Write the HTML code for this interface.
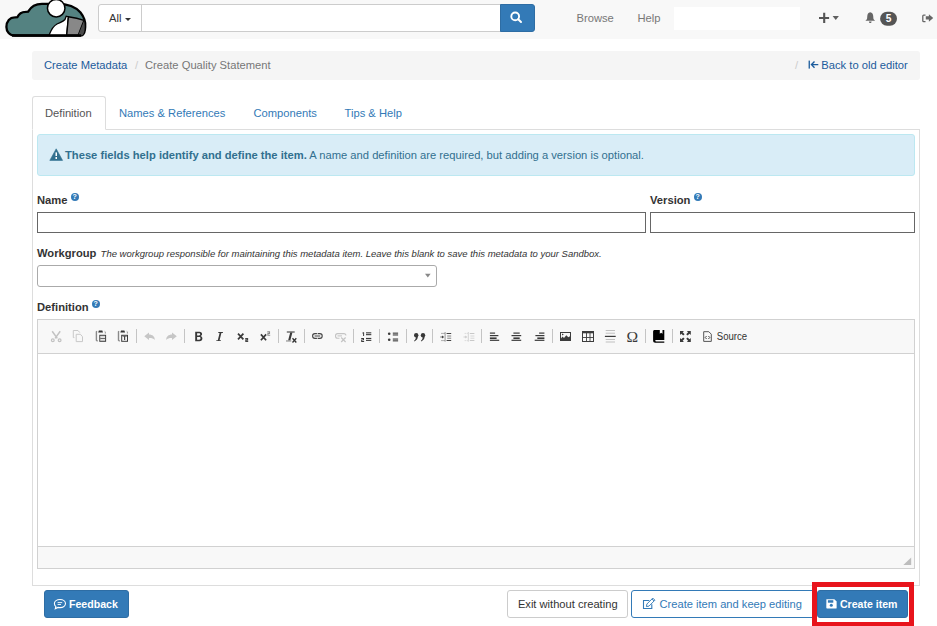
<!DOCTYPE html>
<html><head><meta charset="utf-8">
<style>
*{box-sizing:border-box;margin:0;padding:0}
html,body{width:937px;height:626px;overflow:hidden;background:#fff;font-family:"Liberation Sans",sans-serif;font-size:11.2px;color:#333;position:relative}
.abs{position:absolute}
#nav{left:0;top:0;width:937px;height:38.8px;background:#f8f8f8}
#ig{left:98px;top:4px;width:437px;height:28px}
#allbtn{left:0;top:0;width:44px;height:28px;border:1px solid #ccc;border-radius:3px 0 0 3px;background:#fff}
#inp{left:43px;top:0;width:360px;height:28px;border:1px solid #ccc;background:#fff}
#sbtn{left:402px;top:0;width:35px;height:28px;background:#337ab7;border:1px solid #2e6da4;border-radius:0 3px 3px 0}
.navtxt{color:#777;font-size:11.2px}
#bc{left:32px;top:51px;width:888px;height:29px;background:#f5f5f5;border-radius:3px}
.link{color:#1b5b9c}
#tabc{left:32px;top:129px;width:888px;height:457px;border:1px solid #ddd;border-top:1px solid #ddd}
#tabact{left:32px;top:96px;width:74px;height:34px;border:1px solid #ddd;border-bottom:1px solid #fff;border-radius:3px 3px 0 0;background:#fff}
.tab{color:#337ab7}
#alert{left:37px;top:134px;width:878px;height:42px;background:#d9edf7;border:1px solid #bce8f1;border-radius:3px;color:#31708f}
.lbl{font-weight:bold;color:#333}
.q{position:relative;top:-1px;display:inline-block;width:8px;height:8px;border-radius:50%;background:#337ab7;color:#fff;font-size:7px;line-height:8px;text-align:center;font-weight:bold;vertical-align:top}
.inp{border:1px solid #666;background:#fff}
#editor{left:37px;top:319px;width:878px;height:250px;border:1px solid #d1d1d1;background:#fff}
#tb{left:0;top:0;width:876px;height:34px;background:#f8f8f8;border-bottom:1px solid #d1d1d1}
#bb{left:0;top:226px;width:876px;height:22px;background:#f8f8f8;border-top:1px solid #d1d1d1}
.btn{border-radius:3px;font-size:11.2px;text-align:center}
</style></head><body>
<div id="nav" class="abs"></div>
<svg class="abs" style="left:0;top:0" width="90" height="40" viewBox="0 0 90 40">
  <path d="M15 35.5 C9.5 35.5 6.4 31.5 6.4 27 C6.4 21 10 17.3 14.5 17.3 L17.3 17.2 C19 13.5 22 11.8 25.5 11.8 L28.1 11.6 C31 6.5 36 3.8 42 3.8 L56 3.8 C68 3.6 76 7 80.5 12.5 C84.5 17.5 85.6 23 85.2 27 C85 31.5 84 34 82.5 35 C81.8 35.5 81 35.5 80 35.5 Z" fill="#548281" stroke="#000" stroke-width="2.3"/>
  <path d="M49 35.3 C51 30 53 26 57 24 C60 22.5 63 22 65 19.5 L66.2 16.2 L68.4 16.7 L66.7 35.3 Z" fill="#fff" stroke="#000" stroke-width="1.3"/>
  <path d="M68.4 16.7 C73 17.3 79 18.5 84 20.3 L78.2 35.3 L66.7 35.3 Z" fill="#888" stroke="#000" stroke-width="1.4"/>
  <path d="M83.8 21.5 L78.2 35.3 L82.5 35.3 C84.5 33 85.2 28 84.3 21.5 Z" fill="#4a4a4a"/>
  <path d="M12 35.5 L81 35.5" stroke="#000" stroke-width="2.4"/>
  <circle cx="56.2" cy="8.2" r="8.75" fill="#fff" stroke="#000" stroke-width="1.5"/>
</svg>
<div id="ig" class="abs">
  <div id="allbtn" class="abs"><span class="abs" style="left:10px;top:7px;font-size:11.2px;color:#333">All</span><span class="abs" style="left:26px;top:12.6px;width:0;height:0;border-left:3px solid transparent;border-right:3px solid transparent;border-top:3px solid #333"></span></div>
  <div id="inp" class="abs"></div>
  <div id="sbtn" class="abs">
    <svg class="abs" style="left:-2px;top:-5px" width="36" height="28" viewBox="499 0 36 28"><circle cx="515.2" cy="16.4" r="3.9" fill="none" stroke="#fff" stroke-width="1.9"/><path d="M518.2 19.3 L521 22" stroke="#fff" stroke-width="2" stroke-linecap="round"/></svg>
  </div>
</div>
<span class="abs navtxt" style="left:576.5px;top:12px">Browse</span>
<span class="abs navtxt" style="left:637.5px;top:12px">Help</span>
<div class="abs" style="left:674px;top:7px;width:126px;height:23px;background:#fff"></div>
<svg class="abs" style="left:810px;top:0" width="127" height="38" viewBox="810 0 127 38">
 <path d="M824.2 12.8 V22.9 M819 18 H829.1" stroke="#555" stroke-width="2.1"/>
 <path d="M832.6 16.1 H838.9 L835.75 19.9 Z" fill="#606060"/>
 <path d="M870.2 12.2 C868.2 12.5 867.4 14 867.3 16 L867.1 18.6 C866.9 19.6 866 20.1 865.4 20.8 H875.1 C874.5 20.1 873.6 19.6 873.4 18.6 L873.2 16 C873.1 14 872.3 12.5 870.2 12.2 Z" fill="#666"/>
 <path d="M868.9 21.4 H871.6 C871.5 22.4 871 23 870.25 23 C869.5 23 869 22.4 868.9 21.4 Z" fill="#666"/>
 <rect x="880.1" y="11.7" width="16.9" height="14" rx="7" fill="#555"/>
 <text x="888.55" y="21.6" text-anchor="middle" font-family="Liberation Sans" font-weight="bold" font-size="10.2" fill="#fff">5</text>
 <path d="M925.5 15.1 H923.7 C923.1 15.1 922.8 15.4 922.8 16 V20.8 C922.8 21.4 923.1 21.7 923.7 21.7 H925.5" fill="none" stroke="#666" stroke-width="1.3"/>
 <path d="M925.8 16.3 H928.9 V14.2 L933.2 17.95 L928.9 21.7 V19.6 H925.8 Z" fill="#666"/>
</svg>
<div id="bc" class="abs">
  <span class="abs link" style="left:12px;top:8px">Create Metadata</span>
  <span class="abs" style="left:103px;top:8px;color:#ccc">/</span>
  <span class="abs" style="left:113px;top:8px;color:#777">Create Quality Statement</span>
  <span class="abs" style="left:763px;top:8px;color:#ccc">/</span>
  <svg class="abs" style="left:0;top:0" width="888" height="29" viewBox="32 51 888 29"><rect x="808.6" y="60.6" width="1.3" height="8" fill="#1b5b9c"/><path d="M810.5 64.5 L814 61 L815 62 L813 64 H818.3 V65.2 H813 L815 67.2 L814 68.2 Z" fill="#1b5b9c"/></svg><span class="abs link" style="left:789.3px;top:8px">Back to old editor</span>
</div>

<div id="tabc" class="abs"></div>
<div id="tabact" class="abs"><span class="abs" style="left:12px;top:10px;color:#555">Definition</span></div>
<span class="abs tab" style="left:119px;top:107px">Names &amp; References</span>
<span class="abs tab" style="left:253.5px;top:107px">Components</span>
<span class="abs tab" style="left:344.5px;top:107px">Tips &amp; Help</span>

<div id="alert" class="abs"><svg class="abs" style="left:-2px;top:-2px" width="40" height="42" viewBox="36 133 40 42"><path d="M56.2 148.8 L62.6 160.4 H49.8 Z" fill="#31708f" stroke="#31708f" stroke-width="0.6" stroke-linejoin="round"/><rect x="55.5" y="152.4" width="1.5" height="3.6" fill="#fff"/><rect x="55.5" y="157" width="1.5" height="2" fill="#fff"/></svg><span class="abs" style="left:27px;top:14px"><b>These fields help identify and define the item.</b> A name and definition are required, but adding a version is optional.</span></div>

<span class="abs lbl" style="left:37px;top:194px">Name <span class="q">?</span></span>
<div class="abs inp" style="left:37px;top:212px;width:609px;height:21px"></div>
<span class="abs lbl" style="left:650px;top:194px">Version <span class="q">?</span></span>
<div class="abs inp" style="left:650px;top:212px;width:265px;height:21px"></div>

<span class="abs lbl" style="left:37px;top:247px">Workgroup <i style="font-weight:normal;font-size:9.5px;margin-left:1px">The workgroup responsible for maintaining this metadata item. Leave this blank to save this metadata to your Sandbox.</i></span>
<div class="abs" style="left:37px;top:265px;width:400px;height:22px;border:1px solid #aaa;border-radius:3px;background:#fff"></div>

<svg class="abs" style="left:420px;top:270px" width="15" height="12" viewBox="420 270 15 12"><path d="M425 273.8 H430.6 L427.8 277.6 Z" fill="#888"/></svg>
<span class="abs lbl" style="left:37px;top:301px">Definition <span class="q">?</span></span>
<div id="editor" class="abs">
  <div id="tb" class="abs"></div>
  <div id="bb" class="abs"></div>
</div>
<svg class="abs" style="left:903px;top:557px" width="9" height="9" viewBox="903 557 9 9"><path d="M903.3 565 L911.2 557.4 V565 Z" fill="#bdbdbd"/></svg>
<svg class="abs" style="left:37px;top:319px" width="878" height="34" viewBox="37 319 878 34">
<g fill="none" stroke-linecap="butt">
 <!-- cut -->
 <g stroke="#c2c2c2" stroke-width="1.2">
  <path d="M52.2 331.3 L57.3 338.4 M60.2 331.3 L55.1 338.4" stroke-width="1.5"/>
  <circle cx="52.8" cy="340.3" r="1.4"/><circle cx="59.6" cy="340.3" r="1.4"/>
 </g>
 <!-- copy -->
 <g stroke="#c8c8c8" stroke-width="1">
  <path d="M74.4 337.6 L73.3 337.6 L73.3 330.5 L78 330.5 L79.8 332.6"/>
  <path d="M76.2 334.3 L80.4 334.3 L82.5 336.7 L82.5 341.6 L76.2 341.6 Z"/>
 </g>
 <!-- paste -->
 <g>
  <path d="M97 331.3 L96.4 331.8 L96.4 340.2 L97.6 341.2" stroke="#8a8a8a" stroke-width="1.4"/>
  <path d="M104.6 331.3 L105.3 331.8 L105.3 333.6" stroke="#999" stroke-width="1"/>
  <rect x="99.8" y="335.3" width="5.8" height="6" stroke="#3c3c3c" stroke-width="1"/>
  <path d="M100.3 336.6 H105.1" stroke="#c8c8c8" stroke-width="0.7"/>
  <path d="M100.3 338.4 H105.1" stroke="#444" stroke-width="0.9"/>
  <path d="M100.3 340.2 H105.1" stroke="#aaa" stroke-width="0.7"/>
 </g>
 <path d="M98.2 332.4 L98.9 330.5 L102.3 330.5 L103 332.4 Z" fill="#333"/>
 <!-- paste text -->
 <g>
  <path d="M119.1 331.3 L118.5 331.8 L118.5 340.2 L119.7 341.2" stroke="#8a8a8a" stroke-width="1.4"/>
  <path d="M126.7 331.3 L127.4 331.8 L127.4 333.6" stroke="#999" stroke-width="1"/>
  <rect x="121.7" y="335.3" width="5.8" height="6" stroke="#3c3c3c" stroke-width="1"/>
  <path d="M122.5 336.5 H126.8" stroke="#777" stroke-width="0.8"/><path d="M124.65 336.3 V340.1" stroke="#333" stroke-width="1.1"/>
 </g>
 <path d="M120.3 332.4 L121 330.5 L124.4 330.5 L125.1 332.4 Z" fill="#333"/>
</g>
<!-- separators -->
<g stroke="#c4c4c4" stroke-width="1">
 <path d="M136.5 329 V343 M184.5 329 V343 M278.5 329 V343 M304.5 329 V343 M353.5 329 V343 M379.5 329 V343 M406.5 329 V343 M432.5 329 V343 M481.5 329 V343 M552.5 329 V343 M645.5 329 V343 M672.5 329 V343"/>
</g>
<!-- undo/redo -->
<path d="M144.3 336.3 L149 332.4 L149 334.5 C152.5 334.6 154.8 336.3 154.8 339.9 C153.3 338.2 151.3 337.9 149 338 L149 340.1 Z" fill="#c6c6c6"/>
<path d="M176.8 336.3 L172 332.4 L172 334.5 C168.5 334.6 166.2 336.3 166.2 339.9 C167.7 338.2 169.7 337.9 172 338 L172 340.1 Z" fill="#c6c6c6"/>
<!-- bold B -->
<path fill-rule="evenodd" fill="#383838" d="M195.2 331.7 H199.4 C201.3 331.7 202.1 332.8 202.1 334 C202.1 335.1 201.4 335.8 200.5 336.1 C201.6 336.4 202.4 337.3 202.4 338.6 C202.4 340.2 201.3 341.2 199.4 341.2 H195.2 Z M197.1 333.2 V335.4 H199 C199.8 335.4 200.2 335 200.2 334.3 C200.2 333.6 199.8 333.2 199 333.2 Z M197.1 336.9 V339.7 H199.2 C200 339.7 200.5 339.2 200.5 338.3 C200.5 337.4 200 336.9 199.2 336.9 Z"/>
<!-- italic I -->
<path fill="#3a3a3a" d="M218.4 331.9 H223 L222.8 332.9 H221.4 L219.6 340.2 H221 L220.8 341.1 H216.2 L216.4 340.2 H217.8 L219.6 332.9 H218.2 Z"/>
<!-- subscript -->
<g stroke="#3a3a3a" stroke-width="1.7"><path d="M238 333.6 L243.4 339.4 M243.4 333.6 L238 339.4"/></g>
<path d="M245.2 338.6 H247.6 V340.1 H245.8 V341.5 H248.2" fill="none" stroke="#444" stroke-width="1.1"/>
<!-- superscript -->
<g stroke="#3a3a3a" stroke-width="1.7"><path d="M260.9 334.4 L266.1 340.2 M266.1 334.4 L260.9 340.2"/></g>
<path d="M267.3 331.9 H269.5 V333.5 H267.9 V335.3 H270.2" fill="none" stroke="#8a8a8a" stroke-width="1.1"/>
<!-- remove format -->
<path d="M286.8 331.3 H294.7 V332.7 H286.8 Z" fill="#666"/>
<path d="M290.2 332.5 H292.4 L290.3 340.5 H288.1 Z" fill="#3a3a3a"/>
<path d="M286 340.3 H291.3 V341.6 H286 Z" fill="#9a9a9a"/>
<g stroke="#333" stroke-width="1.3"><path d="M292.5 338.2 L296.3 342.5 M296.3 338.2 L292.5 342.5"/></g>
<!-- link -->
<g stroke="#444" stroke-width="1.1" fill="none">
 <rect x="312.6" y="333.6" width="9.6" height="4.8" rx="2.3"/>
 <path d="M314.6 336 H320.2" stroke="#555"/>
 <path d="M317.4 333.2 V334.6 M317.4 337.4 V338.8" stroke="#f8f8f8" stroke-width="0.9"/>
</g>
<!-- unlink -->
<g stroke="#c4c4c4" stroke-width="1.1" fill="none">
 <path d="M339.5 338.2 H337.6 C336.2 338.2 335.5 337.3 335.5 335.9 C335.5 334.5 336.2 333.6 337.6 333.6 H343.8 C345.2 333.6 345.9 334.5 345.9 335.6"/>
 <path d="M337.5 335.9 H342"/>
 <path d="M341.2 337.5 L345.6 342 M345.6 337.5 L341.2 342" stroke-width="1.2"/>
</g>
<!-- ordered list -->
<g fill="#3a3a3a">
 <path d="M362.3 332.8 L363.4 332.3 H364.1 V336.1 H363.1 V333.3 L362.3 333.6 Z"/>
 <path d="M361.2 338 H364 V340.3 H362.2 V341 H364.1 V342 H361.2 V339.6 H363 V339 H361.2 Z"/>
 <rect x="366" y="332.3" width="5.3" height="1.1"/><rect x="366" y="334.1" width="5.3" height="1.1"/>
 <rect x="366" y="337.9" width="5.3" height="1.1"/><rect x="366" y="339.8" width="5.3" height="1.1"/>
</g>
<!-- unordered list -->
<g fill="#3a3a3a">
 <circle cx="389.2" cy="333.8" r="1.3"/><circle cx="389.2" cy="339.8" r="1.3"/>
 <rect x="392.8" y="332.6" width="5.3" height="1.1"/><rect x="392.8" y="334.4" width="5.3" height="1.1"/>
 <rect x="392.8" y="338.5" width="5.3" height="1.1"/><rect x="392.8" y="340.3" width="5.3" height="1.1"/>
</g>
<!-- blockquote -->
<g fill="#383838">
 <circle cx="416.2" cy="335.2" r="2.2"/><path d="M417.8 336.6 C417.8 339 416.6 340.6 414.3 341.4 L414.1 340.8 C415.3 340 415.8 339 415.8 337.3 Z"/>
 <circle cx="423" cy="335.2" r="2.2"/><path d="M424.6 336.6 C424.6 339 423.4 340.6 421.1 341.4 L420.9 340.8 C422.1 340 422.6 339 422.6 337.3 Z"/>
</g>
<!-- outdent (dark) -->
<g>
 <path d="M445.1 332 V341.7" stroke="#999" stroke-width="1"/>
 <g stroke="#444" stroke-width="1"><path d="M446.6 333.5 H451.2 M446.6 340.5 H451.2"/></g><g stroke="#777" stroke-width="0.9"><path d="M447.2 336 H451.2 M447.2 338.2 H451.2"/></g>
 <g stroke="#666" stroke-width="1" stroke-dasharray="1 1"><path d="M441.5 333.4 H444.5 M441.5 340.6 H444.5"/></g>
 <path d="M440.3 337 H442.5" stroke="#666" stroke-width="1"/><path d="M444.2 337 L442 335.6 V338.4 Z" fill="#444"/>
</g>
<!-- indent (light) -->
<g>
 <path d="M468.3 332 V341.7" stroke="#d4d4d4" stroke-width="1"/>
 <g stroke="#c8c8c8" stroke-width="1"><path d="M469.8 333.5 H474.4 M469.8 340.5 H474.4"/></g><g stroke="#d4d4d4" stroke-width="0.9"><path d="M470.4 336 H474.4 M470.4 338.2 H474.4"/></g>
 <g stroke="#d0d0d0" stroke-width="1" stroke-dasharray="1 1"><path d="M464.7 333.4 H467.7 M464.7 340.6 H467.7"/></g>
 <path d="M463.5 337 H465.7" stroke="#d0d0d0" stroke-width="1"/><path d="M467.4 337 L465.2 335.6 V338.4 Z" fill="#ccc"/>
</g>
<!-- align left/center/right -->
<g fill="#3a3a3a">
 <rect x="489.9" y="332.5" width="5.2" height="1.2"/><rect x="489.9" y="335" width="8.5" height="1.2"/><rect x="489.9" y="337.4" width="6.7" height="1.6"/><rect x="489.9" y="339.7" width="9.3" height="1.2"/>
 <rect x="513.4" y="332.5" width="6.3" height="1.2"/><rect x="511.5" y="335" width="9.7" height="1.2"/><rect x="513.4" y="337.4" width="6.3" height="1.6"/><rect x="511.5" y="339.7" width="9.7" height="1.2"/>
 <rect x="539.1" y="332.5" width="5.3" height="1.2"/><rect x="535.4" y="335" width="9" height="1.2"/><rect x="537.3" y="337.4" width="7.1" height="1.6"/><rect x="534.7" y="339.7" width="9.7" height="1.2"/>
</g>
<!-- image -->
<rect x="560.5" y="332.5" width="10" height="8" fill="none" stroke="#3c3c3c" stroke-width="1"/>
<path d="M561 340.5 V338.4 L562.5 336.6 L564 338 L566.3 335.3 L568.3 337.3 L570 336.2 V340.5 Z" fill="#3c3c3c"/>
<path d="M562 333.6 L563.8 334.6 L562 335.6 Z" fill="#3c3c3c"/>
<!-- table -->
<rect x="582.5" y="331.5" width="11" height="10" fill="none" stroke="#3c3c3c" stroke-width="1"/>
<rect x="582" y="331" width="12" height="2.3" fill="#3c3c3c"/>
<path d="M582.5 337.5 H593.5 M586.5 333 V341.5 M590 333 V341.5" stroke="#3c3c3c" stroke-width="0.9"/>
<!-- hr -->
<g stroke-width="1.1">
 <path d="M605.7 330.5 H615 M605.7 333.2 H615 M605.7 339.5 H615 M605.7 342 H615" stroke="#c0c0c0" stroke-width="1"/>
 <path d="M604.9 336.4 H615.7" stroke="#3a3a3a" stroke-width="1.2"/>
</g>
<!-- omega -->
<text x="626.6" y="341.8" font-family="Liberation Serif" font-size="14.2" fill="#3a3a3a" textLength="11.6" lengthAdjust="spacingAndGlyphs">&#937;</text>
<!-- book -->
<path d="M654.6 330.1 H664.3 V339.9 H656.4 C655.6 339.9 655.2 340.3 655.2 340.8 C655.2 341.3 655.6 341.6 656.4 341.6 H664.3 V342.8 H655.3 C654 342.8 653.1 342 653.1 340.6 V331.6 C653.1 330.7 653.7 330.1 654.6 330.1 Z" fill="#000"/>
<path d="M659.8 330.1 V333.8 L661.1 332.8 L662.5 333.8 V330.1 Z" fill="#fff"/>
<!-- maximize -->
<g fill="#3a3a3a">
 <path d="M680 331 H684 L682.7 332.3 L684.6 334.2 L683.2 335.6 L681.3 333.7 L680 335 Z"/>
 <path d="M690.8 331 H686.8 L688.1 332.3 L686.2 334.2 L687.6 335.6 L689.5 333.7 L690.8 335 Z"/>
 <path d="M680 342 H684 L682.7 340.7 L684.6 338.8 L683.2 337.4 L681.3 339.3 L680 338 Z"/>
 <path d="M690.8 342 H686.8 L688.1 340.7 L686.2 338.8 L687.6 337.4 L689.5 339.3 L690.8 338 Z"/>
</g>
<!-- source doc -->
<path d="M703.7 331.7 H708.8 L711.3 334.2 V341.4 H703.7 Z" fill="none" stroke="#555" stroke-width="1"/>
<path d="M706.6 336 L705.2 337.5 L706.6 339 M708.4 336 L709.8 337.5 L708.4 339" fill="none" stroke="#444" stroke-width="1"/>
<text x="716.8" y="340.2" font-family="Liberation Sans" font-size="10" fill="#333" textLength="30.4" lengthAdjust="spacingAndGlyphs">Source</text>
</svg>


<div class="abs btn" style="left:44px;top:590px;width:85px;height:28px;background:#337ab7;border:1px solid #2e6da4"></div>
<span class="abs" style="left:69px;top:598px;color:#fff;font-weight:bold;font-size:10.6px">Feedback</span>
<div class="abs btn" style="left:507px;top:590px;width:121px;height:27.5px;background:#fff;border:1px solid #ccc;border-radius:3px"></div>
<span class="abs" style="left:517.9px;top:598px;color:#333;font-size:11.15px">Exit without creating</span>
<div class="abs btn" style="left:631px;top:590px;width:185px;height:27.8px;background:#fff;border:1px solid #337ab7;border-radius:3px"></div>
<span class="abs" style="left:659.5px;top:598px;color:#337ab7;font-size:11.15px">Create item and keep editing</span>
<div class="abs btn" style="left:816.7px;top:590px;width:91.3px;height:27.8px;background:#337ab7;border:1px solid #2e6da4;border-radius:3px"></div>
<span class="abs" style="left:839.9px;top:598px;color:#fff;font-weight:bold;font-size:10.57px">Create item</span>
<svg class="abs" style="left:0;top:580px" width="937" height="46" viewBox="0 580 937 46">
 <path d="M60 599.5 C63.1 599.5 65.5 601.3 65.5 603.6 C65.5 605.9 63.1 607.6 60 607.6 C59.3 607.6 58.6 607.5 58 607.4 L55.3 608.8 L55.9 606.6 C54.9 605.9 54.4 604.8 54.4 603.6 C54.4 601.3 56.9 599.5 60 599.5 Z" fill="none" stroke="#fff" stroke-width="1.1"/>
 <path d="M57.6 602.6 H62.2 M57.6 604.5 H61" stroke="#fff" stroke-width="0.9"/>
 <path d="M649.3 600.5 H643.5 V608.5 H651.8 V604.3" fill="none" stroke="#337ab7" stroke-width="1.1"/>
 <path d="M646.4 606.6 L646.9 604 L652.8 598.1 L654.9 600.2 L649 606.1 Z M651.9 599 L654 601.1" fill="none" stroke="#337ab7" stroke-width="0.95"/>
 <path d="M826.4 599.2 H834.4 L836.6 601.4 V607.9 C836.6 608.3 836.3 608.5 835.9 608.5 H827 C826.6 608.5 826.3 608.2 826.3 607.8 Z" fill="#fff"/>
 <rect x="827.9" y="600.2" width="5.4" height="2.5" fill="#337ab7"/>
 <circle cx="831.3" cy="605.3" r="1.5" fill="#337ab7"/>
</svg>
<div class="abs" style="left:812px;top:581.8px;width:102px;height:45px;border:5px solid #e8141c"></div>
</body></html>
